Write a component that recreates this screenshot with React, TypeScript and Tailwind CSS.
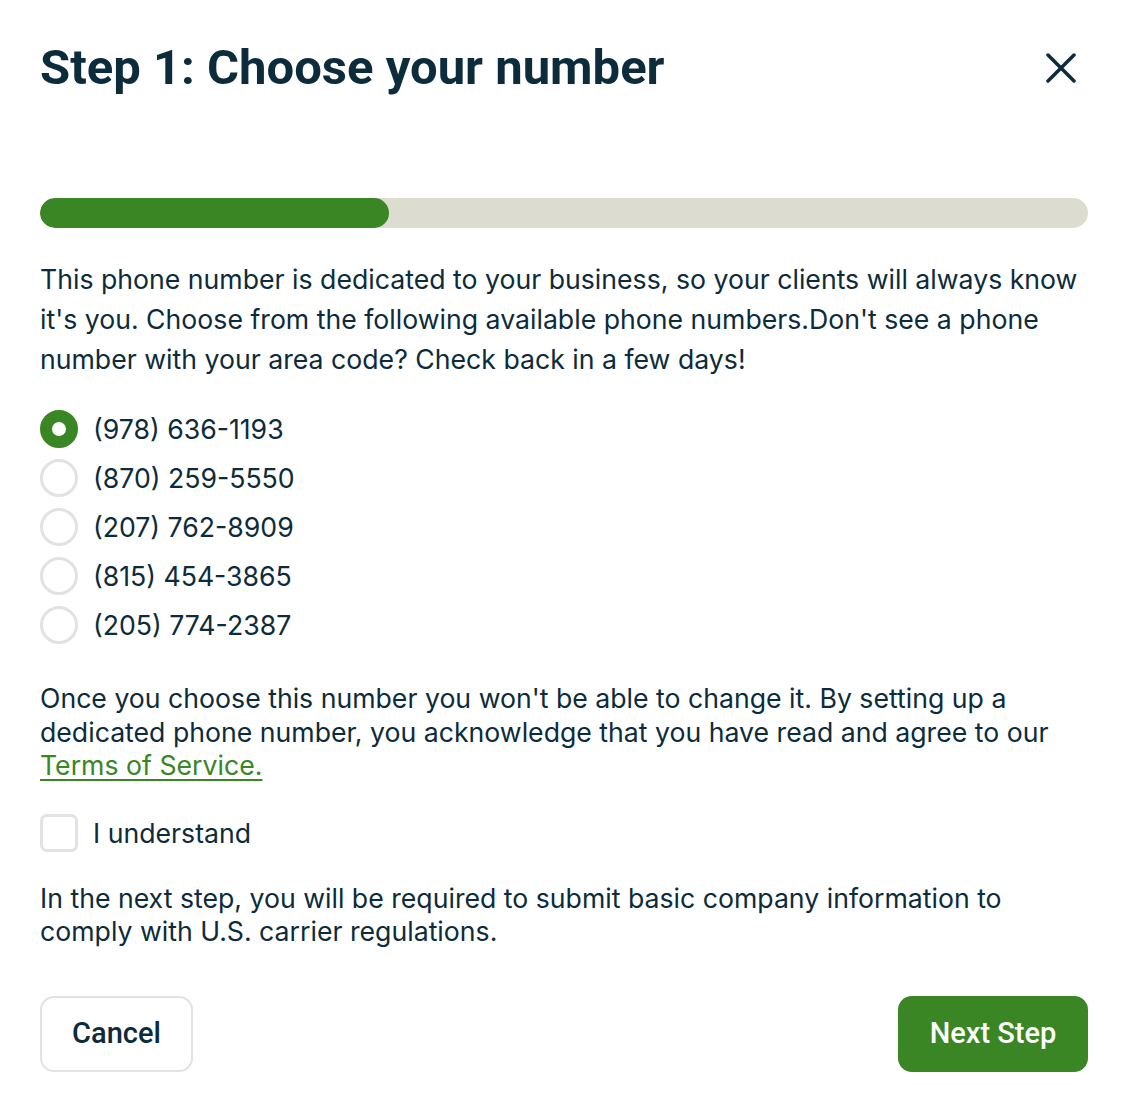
import React from "react";

const numbers = [
  "(978) 636-1193",
  "(870) 259-5550",
  "(207) 762-8909",
  "(815) 454-3865",
  "(205) 774-2387",
];

const ChooseNumber = () => {
  const [selected, setSelected] = React.useState(0);
  const [agreed, setAgreed] = React.useState(false);

  return (
    <div className="bg-white w-[1128px] min-h-[1116px] px-10 pt-10 text-[#0c2b3b] font-['Inter',sans-serif]">
      <div className="flex items-center justify-between h-14">
        <h1 className="text-[49px] leading-[56px] font-bold font-['Roboto',sans-serif]">
          Step 1: Choose your number
        </h1>
        <button className="mr-[12px] text-[#0c2b3b]" aria-label="Close">
          <svg width="30" height="30" viewBox="0 0 30 30" fill="none" stroke="currentColor" strokeWidth="3.5" strokeLinecap="round">
            <path d="M2 2L28 28M28 2L2 28" />
          </svg>
        </button>
      </div>

      <div className="mt-[102px] h-[30px] w-full rounded-full bg-[#dddcd0] overflow-hidden">
        <div className="h-full w-[33.3%] rounded-full bg-[#3a8524]" />
      </div>

      <p className="mt-[31px] text-[26.67px] leading-[40px]">
        This phone number is dedicated to your business, so your clients will always know it's you. Choose from the following available phone numbers.Don't see a phone number with your area code? Check back in a few days!
      </p>

      <div className="mt-[25px] flex flex-col">
        {numbers.map((n, i) => (
          <label key={n} className="flex items-center h-[49px] gap-[15px] cursor-pointer" onClick={() => setSelected(i)}>
            {selected === i ? (
              <span className="w-[38px] h-[38px] rounded-full border-[12px] border-[#3a8524] bg-white" />
            ) : (
              <span className="w-[38px] h-[38px] rounded-full border-[3px] border-[#e2e2e2] bg-white" />
            )}
            <span className="text-[26.67px] leading-[34px]">{n}</span>
          </label>
        ))}
      </div>

      <p className="mt-[33px] text-[26.67px] leading-[33.5px]">
        Once you choose this number you won't be able to change it. By setting up a dedicated phone number, you acknowledge that you have read and agree to our{" "}
        <a href="#" className="text-[#3a8524] underline underline-offset-[4px] decoration-[2px]">Terms of Service.</a>
      </p>

      <label className="mt-[31px] flex items-center gap-[15px] h-[38px] cursor-pointer" onClick={() => setAgreed(!agreed)}>
        <span className={`w-[38px] h-[38px] rounded-[7px] border-[3px] ${agreed ? "border-[#3a8524] bg-[#3a8524]" : "border-[#e2e2e2] bg-white"}`} />
        <span className="text-[26.67px] leading-[34px]">I understand</span>
      </label>

      <p className="mt-[30px] text-[26.67px] leading-[33.5px]">
        In the next step, you will be required to submit basic company information to comply with U.S. carrier regulations.
      </p>

      <div className="mt-[47px] flex justify-between">
        <button className="h-[76px] w-[153px] rounded-[14px] border-2 border-[#e2e2e2] bg-white text-[29px] font-medium text-[#0c2b3b] font-['Roboto',sans-serif]">
          Cancel
        </button>
        <button className="h-[76px] w-[190px] rounded-[14px] bg-[#3a8524] text-[29px] font-medium text-white font-['Roboto',sans-serif]">
          Next Step
        </button>
      </div>
    </div>
  );
};

export default function App() {
  return <ChooseNumber />;
}
